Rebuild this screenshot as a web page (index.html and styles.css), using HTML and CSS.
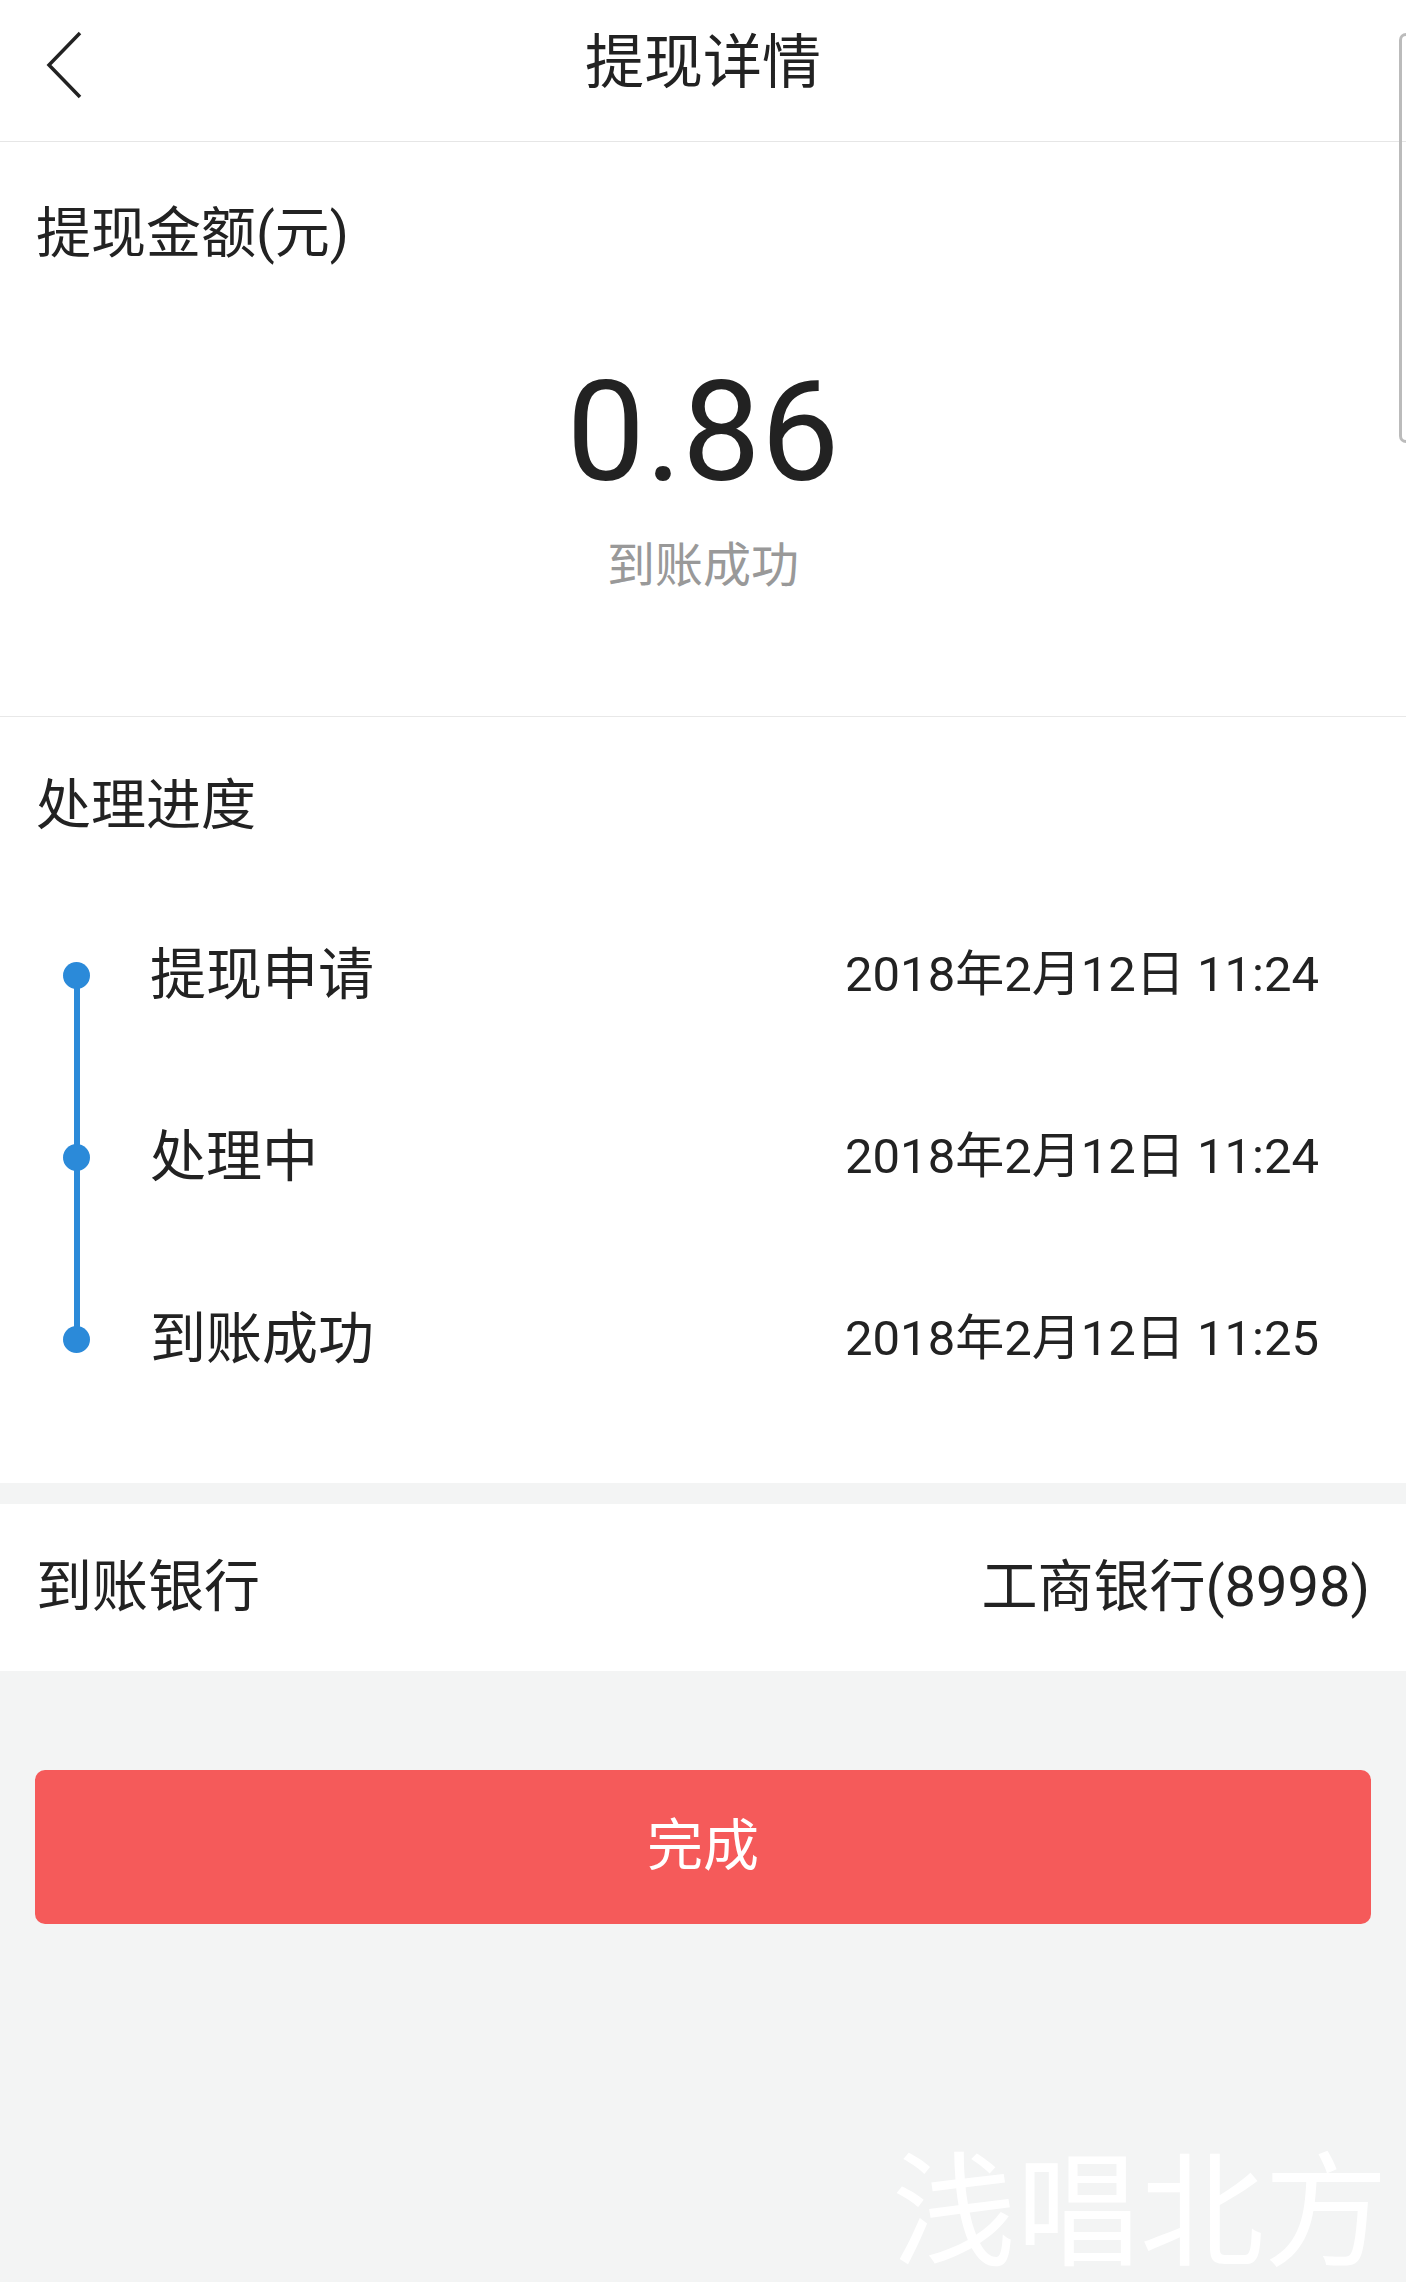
FILE: index.html
```html
<!DOCTYPE html>
<html lang="zh-CN">
<head>
    <meta charset="UTF-8">
    <meta name="viewport" content="width=device-width, initial-scale=1.0">
    <title>提现详情</title>
    <link rel="stylesheet" href="styles.css">
</head>
<body>

<div class="page">
    <!-- Top bar -->
    <div class="top-bar">
        <a class="back-btn" href="#">
            <svg width="44" height="70" viewBox="0 0 44 70">
                <polyline points="38,3 7,35 38,67" fill="none" stroke="#222" stroke-width="3.5" stroke-linejoin="miter"/>
            </svg>
        </a>
        <h1 class="top-title">提现详情</h1>
    </div>

    <!-- Amount -->
    <div class="amount-card">
        <div class="amount-label">提现金额(元)</div>
        <div class="amount-value">0.86</div>
        <div class="amount-status">到账成功</div>
    </div>

    <!-- Progress -->
    <div class="progress-card">
        <div class="section-title">处理进度</div>
        <ul class="steps">
            <li class="step">
                <span class="step-dot"></span>
                <span class="step-name">提现申请</span>
                <span class="step-time">2018年2月12日 11:24</span>
            </li>
            <li class="step">
                <span class="step-dot"></span>
                <span class="step-name">处理中</span>
                <span class="step-time">2018年2月12日 11:24</span>
            </li>
            <li class="step">
                <span class="step-dot"></span>
                <span class="step-name">到账成功</span>
                <span class="step-time">2018年2月12日 11:25</span>
            </li>
        </ul>
    </div>

    <!-- Bank -->
    <div class="bank-row">
        <span class="bank-label">到账银行</span>
        <span class="bank-value">工商银行(8998)</span>
    </div>

    <button class="done-btn" type="button"><span>完成</span></button>

    <div class="watermark">浅唱北方</div>
    <div class="screen-edge"></div>
</div>

</body>
</html>
```

FILE: styles.css
```css
body {
    margin: 0;
    padding: 0;
    background: #f3f4f4;
    font-family: Roboto, "Noto Sans CJK SC", sans-serif;
    color: #222;
}
.page {
    position: relative;
    width: 1406px;
    height: 2282px;
    overflow: hidden;
    background: #f3f4f4;
}
.top-bar {
    display: flex;
    align-items: center;
    justify-content: center;
    position: relative;
    height: 126px;
    padding-bottom: 15px;
    background: #fff;
    border-bottom: 1px solid #e6e6e6;
}
.back-btn {
    position: absolute;
    left: 42px;
    top: 30px;
    display: block;
    line-height: 0;
}
.top-title {
    margin: 0;
    font-size: 59px;
    font-weight: normal;
    line-height: 80px;
}
.amount-card {
    background: #fff;
    padding: 51px 0 120px;
    border-bottom: 1px solid #e8e8e8;
}
.amount-label {
    padding-left: 36px;
    font-size: 55px;
    line-height: 80px;
}
.amount-value {
    margin-top: 79px;
    text-align: center;
    font-size: 140px;
    line-height: 160px;
    color: #222;
}
.amount-status {
    margin-top: 24px;
    text-align: center;
    font-size: 48px;
    line-height: 60px;
    color: #999;
}
.progress-card {
    background: #fff;
    padding: 48px 0 53px;
}
.section-title {
    padding-left: 36px;
    font-size: 55px;
    line-height: 80px;
}
.steps {
    list-style: none;
    margin: 39px 0 0;
    padding: 0;
}
.step {
    position: relative;
    display: flex;
    align-items: center;
    height: 182px;
    padding-right: 87px;
}
.step::after {
    content: "";
    position: absolute;
    left: 74px;
    top: 50%;
    width: 6px;
    height: 100%;
    background: #2b8ad9;
}
.step:last-child::after {
    display: none;
}
.step-dot {
    position: relative;
    z-index: 1;
    width: 27px;
    height: 27px;
    margin-left: 63px;
    border-radius: 50%;
    background: #2b8ad9;
}
.step-name {
    flex: 1;
    margin: 0 0 12px 60px;
    font-size: 56px;
}
.step-time {
    margin-bottom: 12px;
    font-size: 49px;
}
.bank-row {
    display: flex;
    align-items: center;
    justify-content: space-between;
    height: 167px;
    margin-top: 21px;
    padding: 0 36px;
    background: #fff;
    font-size: 56px;
}
.bank-row span {
    margin-bottom: 12px;
}
.done-btn {
    display: block;
    width: 1336px;
    height: 154px;
    margin: 99px 0 0 35px;
    padding: 0 0 14px;
    border: none;
    border-radius: 10px;
    background: #f55a5a;
    color: #fff;
    font-family: Roboto, "Noto Sans CJK SC", sans-serif;
    font-size: 56px;
}
.watermark {
    position: absolute;
    right: 18px;
    top: 2140px;
    font-family: "Noto Sans CJK SC", sans-serif;
    font-size: 124px;
    line-height: 1;
    color: #fff;
}
.screen-edge {
    position: absolute;
    right: 0;
    top: 33px;
    width: 4px;
    height: 404px;
    border: 3px solid #bbb;
    border-right: none;
    border-radius: 8px 0 0 8px;
}
```
